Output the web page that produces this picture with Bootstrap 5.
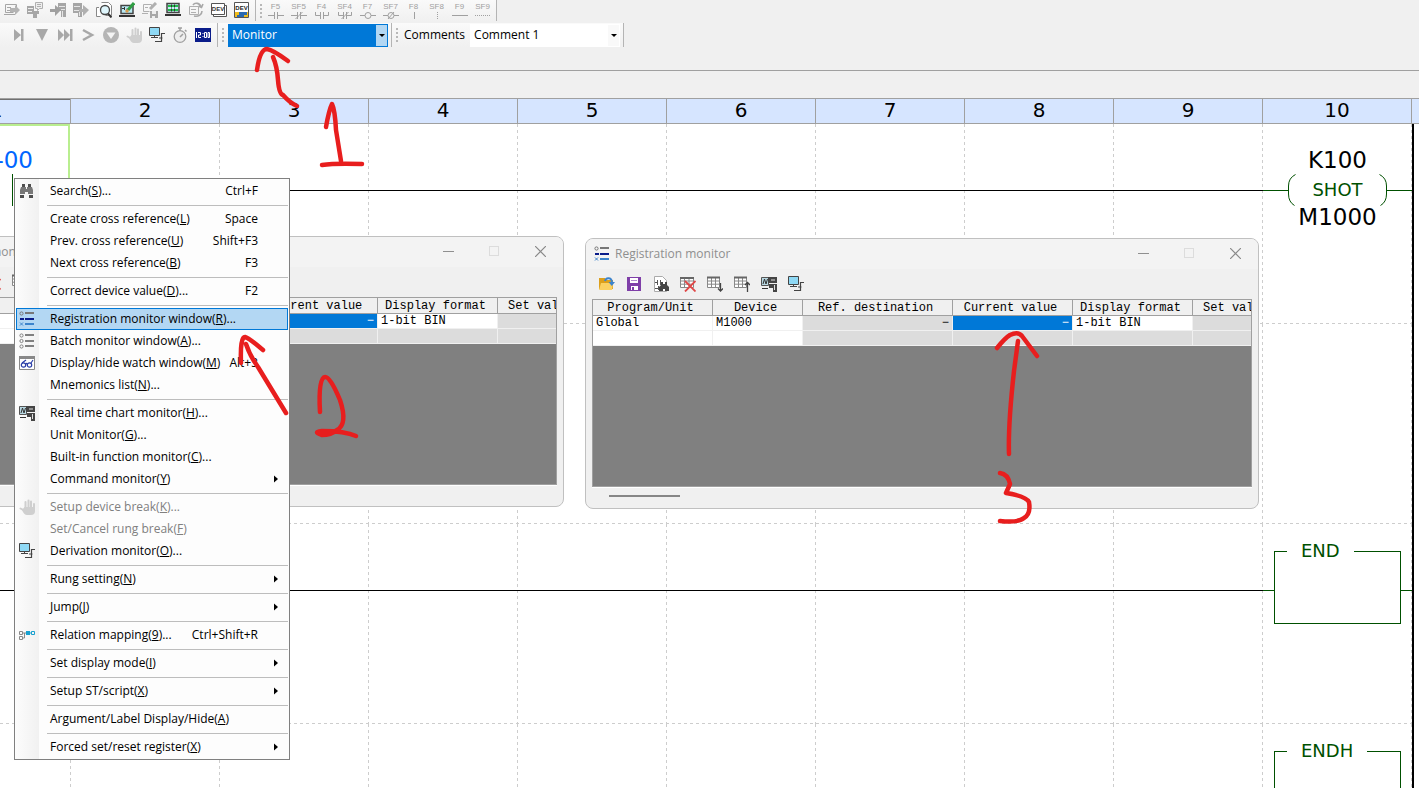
<!DOCTYPE html>
<html lang="en">
<head>
<meta charset="utf-8">
<meta name="viewport" content="width=device-width, initial-scale=1">
<title>Ladder monitor</title>
<link href="https://cdn.jsdelivr.net/npm/bootstrap@5.3.0/dist/css/bootstrap.min.css" rel="stylesheet">
<style>
  :root { --ui: "Open Sans", "Noto Sans", sans-serif; --ladder: "DejaVu Sans", sans-serif; --green: #005000; --dash: #cdcdcd; }
  body { background: #f0f0f0; color: #000; font: 12px/16px var(--ui); height: 100vh; }
  svg { display: block; flex: none; }
  .ico { width: 16px; height: 16px; }

  /* toolbars */
  .toolzone { height: 71px; border-bottom: 1px solid #a0a0a0; }
  .strip { background: linear-gradient(#fafafa, #f0f0f0); border-right: 1px solid #b4b4b4; }
  .strip-top { height: 21px; padding-right: 2px; }
  .strip-main { height: 24px; margin-top: 2px; padding-right: 3px; }
  .strip-first { padding-left: 7px; }
  .tool { width: 23px; height: 20px; padding: 0; border: 0; background: none; color: #a0a0a0; display: flex; flex-direction: column; align-items: center; justify-content: center; }
  .tool .cap { font: 8px/8px "Liberation Sans", sans-serif; }
  .grip { width: 2px; height: 14px; margin: 0 4px; background: repeating-linear-gradient(#b8b8b8 0 2px, transparent 2px 4px); }
  .strip-top .grip { margin-right: 2px; }
  .note-label { padding: 0 5px 0 2px; }
  .combo { height: 23px; }
  .combo select { appearance: none; width: 100%; height: 100%; border: 0; border-radius: 0; padding: 0 16px 0 4px; font: 12px/16px var(--ui); background: #fff; color: #000; }
  .combo .drop { right: 1px; top: 1px; bottom: 1px; width: 11px; background: #f9f9f9; pointer-events: none; }
  .combo-on select { background: #0078d7; color: #fff; }
  .combo-on .drop { background: #b3d7f3; }
  .combo-mode { width: 160px; }
  .combo-note { width: 150px; }

  /* ladder sheet */
  .sheet { margin-left: -78px; padding-top: 27px; }
  .lanes { display: grid; grid-template-columns: repeat(10, minmax(0, 1fr)) 7px; }
  .heads { height: 26px; background: #d6e5ff; border-top: 1px solid #a0a0a0; border-bottom: 1px solid #a0a0a0; font: 20px/22px var(--ladder); text-align: center; }
  .heads > div { border-right: 1px solid #a0a0a0; }
  .heads > div:first-child { box-shadow: inset 0 1px #707070; }
  .heads > div:last-child { border-right: 0; }
  .rung { height: 200px; background: repeating-linear-gradient(90deg, var(--dash) 0 3px, transparent 3px 6px) bottom / 100% 1px no-repeat; }
  .slot { background: repeating-linear-gradient(var(--dash) 0 3px, transparent 3px 6px) right / 1px 100% no-repeat; }
  .wired .slot-wire { background: linear-gradient(#000, #000) 0 66px / 100% 1px no-repeat, repeating-linear-gradient(var(--dash) 0 3px, transparent 3px 6px) right / 1px 100% no-repeat; }
  .rail { border-left: 2px solid #000; background: #fff; }
  .picked { border: 2px solid #b9ee8f; border-left: 0; margin-right: 1px; padding-top: 20px; }
  .picked .operand { padding-right: 35px; color: #06f; }
  .operand { font: 23px/28px var(--ladder); }
  .coil { padding-top: 22px; }
  .coil .operand + div { height: 32px; }
  .coil .opname, .fnbox legend { font: 18px/20px var(--ladder); color: var(--green); }
  .link-h { height: 1px; background: var(--green); }
  .fnbox { height: 83px; margin: 17px 0 0; border: 1px solid var(--green); }
  .fnbox legend { float: none; width: auto; margin: 0 0 0 12px; padding: 0 14px; }
  .stub { width: 11px; margin-top: 66px; }
  .contact { width: 1px; height: 32px; margin-right: 55px; background: var(--green); }

  /* floating monitor windows */
  .win { width: 674px; height: 271px; border: 1px solid #c0c0c0; border-radius: 8px; background: #f0f0f0; z-index: 2; overflow: hidden; }
  .win-a { left: -110px; top: 236px; }
  .win-b { left: 585px; top: 238px; }
  .win-head { height: 30px; background: #f3f3f3; color: #8f8f8f; padding: 0 0 0 8px; }
  .win-head .ico { margin-right: 5px; }
  .win-head button { width: 46px; height: 28px; padding: 0; border: 0; background: none; display: flex; align-items: center; justify-content: center; align-self: flex-start; }
  .win-tools { height: 30px; padding: 0 13px; gap: 11px; }
  .win-tools button { padding: 0; border: 0; background: none; }
  .pane { height: 188px; margin: 0 6px; border: 1px solid #a0a0a0; background: #808080; overflow: hidden; box-shadow: 0 1px #fff; }
  .pane table { table-layout: fixed; width: 690px; border-collapse: separate; border-spacing: 0; font: 12px/14px "Liberation Mono", monospace; }
  .pane th { height: 16px; padding: 1px 4px 0 0; line-height: 14px; font-weight: 400; text-align: center; background: #f0f0f0; border-right: 1px solid #a0a0a0; border-bottom: 1px solid #a0a0a0; white-space: nowrap; }
  .pane td { height: 15px; padding: 0 3px; background: #fff; border-right: 1px solid #f0f0f0; border-bottom: 1px solid #f0f0f0; white-space: nowrap; }
  .pane td.off { background: #dcdcdc; }
  .pane td.sel { background: #0078d7; color: #fff; }
  .thumb { width: 71px; height: 2px; margin: 8px 0 0 23px; background: #868686; }

  /* context menu */
  .ctx { display: block; left: 14px; top: 178px; width: 276px; padding: 1px; border: 1px solid #808080; border-radius: 0; z-index: 5; background: linear-gradient(90deg, #fcfcfc, #f1f1f1) 1px 0 / 23px 100% no-repeat #fdfdfd; font: 12px/16px var(--ui); color: #000; }
  .ctx button { display: flex; align-items: center; width: 100%; height: 22px; padding: 0 9px 0 2px; border: 1px solid transparent; background: none; color: #000; text-align: left; }
  .ctx button.hot { background: #b3d7f3; border-color: #0078d7; }
  .ctx button:disabled { color: #808080; }
  .ctx .ico { margin-right: 15px; }
  .ctx .key { margin-left: auto; padding-right: 20px; }
  .ctx hr { height: 1px; margin: 3px 0 2px 31px; border: 0; background: #bdbdbd; opacity: 1; }
  .more { margin-left: auto; }
  .ink { inset: 0; width: 100%; height: 100%; z-index: 9; pointer-events: none; fill: none; stroke: #e81e1e; stroke-width: 4.5; stroke-linecap: round; stroke-linejoin: round; }
</style>
</head>
<body class="d-flex flex-column overflow-hidden position-relative">

<svg width="0" height="0" class="position-absolute" aria-hidden="true">
  <symbol id="i-read" viewBox="0 0 16 16"><path fill="none" stroke="#a6a6a6" d="M1.500 2.500h11v3M1.500 2.500v8h8M0 12.500h11M3 5.500h4M3 8.500h4"/><path fill="#b4b4b4" d="M6 6h5V3l5 5-5 5v-3H6z"/></symbol>
  <symbol id="i-plcnote" viewBox="0 0 16 16"><path fill="#a6a6a6" d="M0 4h7v5h5v3h-2v4H6v-4H0z"/><path fill="#eee" stroke="#b0b0b0" d="M8.500.5h7v6h-3l-2 2v-2h-2z"/><path stroke="#b0b0b0" d="M10 2.500h4M10 4.500h4"/><path stroke="#eee" d="M1 6.500h5M1 9.500h4"/></symbol>
  <symbol id="i-plcin" viewBox="0 0 16 16"><path fill="#a6a6a6" d="M8 1h8v14h-5V9H8z"/><path stroke="#e6e6e6" d="M9 4.500h6M11 7.500h4M12.500 9v6"/><path fill="#a0a0a0" d="M0 7h5V3l6 5-6 6v-4H0z"/></symbol>
  <symbol id="i-plcout" viewBox="0 0 16 16"><path fill="#a6a6a6" d="M0 1h9v14H5v-4H0z"/><path stroke="#e6e6e6" d="M1 4.500h6M1 8.500h5M6.500 10v4"/><path fill="#b0b0b0" d="M6 7h4V3l6 5-6 6v-4H6z"/></symbol>
  <symbol id="i-verify" viewBox="0 0 16 16"><path fill="#fff" stroke="#888" d="M5.500.5h7l3 3v10h-6M3 5.500H.5v9h4"/><circle cx="9" cy="8" r="4.500" fill="#dff6fc" stroke="#444" stroke-width="1.300"/><path stroke="#333" stroke-width="2" d="M12 11.500l3.500 4"/></symbol>
  <symbol id="i-edit" viewBox="0 0 16 16"><path fill="#b9e9f3" stroke="#444" stroke-width="1.500" d="M2 3.500h12v8H2z"/><path fill="#333" d="M0 13h16v2H0z"/><path stroke="#333" d="M3 6.500h3M5.500 5v3M8 6.500V9"/><path stroke="#2f9e44" stroke-width="3" d="M9 8l6-7"/><path stroke="#d89a4e" stroke-width="3" d="M7 10l2-2"/></symbol>
  <symbol id="i-save-g" viewBox="0 0 16 16"><path fill="none" stroke="#b0b0b0" d="M1.500 2.500h8v3M1.500 2.500v7h6M0 11.500h6M3 5.500h3"/><path stroke="#b0b0b0" stroke-width="3" d="M8 7l6-6"/><path fill="#a8a8a8" d="M8 9h8v7H8z"/><path fill="#eee" d="M10 9h4v3h-4zM10 14h3v2h-3z"/></symbol>
  <symbol id="i-mon" viewBox="0 0 16 16"><path fill="#c8eef5" stroke="#444" stroke-width="1.500" d="M2 1.500h12v9H2z"/><path fill="#333" d="M0 12h16v2H0z"/><path stroke="#1fbf4a" stroke-width="2" d="M3 4h10M3 8h10"/><path stroke="#333" d="M6.500 2.500v3M9.500 2.500v3M6.500 6.500v3M9.500 6.500v3"/></symbol>
  <symbol id="i-sync" viewBox="0 0 16 16"><path fill="none" stroke="#b0b0b0" d="M1.500 4.500h9v8h-9zM3 7.500h5M3 10.500h5"/><path fill="none" stroke="#a8a8a8" stroke-width="1.600" d="M5 3c2-3 7-2 8 2M14 9c0 4-4 6-8 5M10.500 4l3 1.500L15 2"/></symbol>
  <symbol id="i-dev" viewBox="0 0 16 16"><path fill="#fff" stroke="#555" d="M2.500 3.500h13v11h-13z"/><path fill="#fff" stroke="#555" d="M.5 1.500h13v11H.5z"/><text x="7" y="9" font-family="Liberation Sans, sans-serif" font-size="6" font-weight="bold" text-anchor="middle" fill="#333">DEV</text></symbol>
  <symbol id="i-dev2" viewBox="0 0 16 16"><path fill="#fff" stroke="#555" d="M.5.500h14v15H.5z"/><text x="7.500" y="8" font-family="Liberation Sans, sans-serif" font-size="6" font-weight="bold" text-anchor="middle" fill="#222">DEV</text><path fill="#f0bc1b" d="M1 10h13v5H1z"/><path fill="#2a69b0" d="M5 10h8v3h-3v2H3v-2h2z"/></symbol>
  <symbol id="i-step" viewBox="0 0 16 16"><path fill="#a8a8a8" d="M3 2l7 6-7 6zM10 2h2.500v12H10z"/></symbol>
  <symbol id="i-down" viewBox="0 0 16 16"><path fill="#a8a8a8" d="M2 2h12L8 14z"/></symbol>
  <symbol id="i-ff" viewBox="0 0 16 16"><path fill="#a8a8a8" d="M1 2l6 6-6 6zM7 2l6 6-6 6zM13 2h2.500v12H13z"/></symbol>
  <symbol id="i-gt" viewBox="0 0 16 16"><path fill="none" stroke="#a8a8a8" stroke-width="2.500" d="M3 3l9 5-9 5"/></symbol>
  <symbol id="i-circ" viewBox="0 0 16 16"><circle cx="8" cy="8" r="8" fill="#b5b5b5"/><path fill="#f4f4f4" d="M3.500 5.500h9L8 12z"/></symbol>
  <symbol id="i-hand" viewBox="0 0 16 16"><path fill="none" stroke="#cfcfcf" stroke-width="2" stroke-linecap="round" d="M6.500 9V3M9.500 8V1.500M12 8V2.500M15 10V5M6 12L1.500 9.500"/><path fill="#cfcfcf" d="M5.500 8H16v4q0 4-4 4H8q-3 0-5-5z"/></symbol>
  <symbol id="i-deriv" viewBox="0 0 16 16"><path fill="#8fd9f5" stroke="#444" d="M.5.500h10v8H.5z"/><path stroke="#444" d="M5.500 9v2M2 10.500h7"/><path fill="none" stroke="#444" stroke-width="1.200" d="M16 6.500h-3.500v4M10 11h3.500M6 14.500h6.500V11"/></symbol>
  <symbol id="i-watch" viewBox="0 0 16 16"><circle cx="8" cy="9.500" r="5.800" fill="#eee" stroke="#a0a0a0" stroke-width="1.300"/><path stroke="#a0a0a0" stroke-width="1.500" d="M6 1h4M8 1v3M8 10l3-3M13 3l1.500 1.500"/></symbol>
  <symbol id="i-clock" viewBox="0 0 16 16"><path fill="#0a1c8a" d="M0 1h16v14H0z"/><path fill="none" stroke="#fff" d="M1.500 5v6M3 5.500h2.500V8H3.500v2.500H6M8 6v1M8 9v1M9.500 5.500h2v5h-2zM13 5.500h1.500v5H13z"/></symbol>

  <symbol id="i-find" viewBox="0 0 16 16"><path fill="#4e4e4e" d="M3 1h3v3H3zM9 1h3v3H9zM1 12h4v3H1zM10 12h4v3h-4z"/><path fill="#777" d="M2 4h5v2h1V4h5l1 3v4H9V9H6v2H1V7z"/></symbol>
  <symbol id="i-reg" viewBox="0 0 16 16"><circle cx="2.500" cy="2.500" r="1.600" fill="none" stroke="#777"/><path stroke="#777" stroke-width="2" d="M6 2h9"/><path stroke="#0a1c8a" stroke-width="2" d="M1 8h4M6 8h9"/><path stroke="#3d84cc" stroke-width="2" d="M6 13h9"/><path stroke="#3d84cc" d="M1 11.500l3 3M4 11.500l-3 3"/></symbol>
  <symbol id="i-batch" viewBox="0 0 16 16"><g fill="none" stroke="#808080"><circle cx="2.500" cy="2.500" r="1.600"/><circle cx="2.500" cy="8" r="1.600"/><circle cx="2.500" cy="13.500" r="1.600"/><path stroke-width="2" d="M6 2h9M6 8h9M6 13h9"/></g></symbol>
  <symbol id="i-glass" viewBox="0 0 16 16"><path fill="#fff" stroke="#888" d="M.5 1.500h15v13H.5z"/><path fill="#888" d="M0 1h16v3H0z"/><g fill="none" stroke="#2a3ea8" stroke-width="1.200"><circle cx="4.500" cy="10" r="2.200"/><circle cx="10.500" cy="10" r="2.200"/><path d="M6.500 9q1-1 2 0M3 8l4-3M12 8l2-3"/></g></symbol>
  <symbol id="i-chart" viewBox="0 0 16 16"><path fill="#b8d8e2" stroke="#555" d="M.5 1.500h7v8h-7z"/><path fill="none" stroke="#333" d="M2 8l1.500-5L5 8l1.500-5M1 12.500h6"/><path fill="#444" d="M7 1h9v6H7zM8 8h8v8h-4v-4H8z"/><path stroke="#ddd" d="M10 4h4M13.500 9v5"/></symbol>
  <symbol id="i-map" viewBox="0 0 16 16"><path fill="none" stroke="#888" d="M.5 4.500h3v3h-3zM.5 9.500h3v3h-3zM4 6h4M5.500 6v5H4"/><path fill="#18a0cf" d="M7 4h4v4H7z"/><path fill="none" stroke="#18a0cf" d="M11 6h1.500v-1.500h3v3h-3V6"/></symbol>

  <symbol id="i-open" viewBox="0 0 16 16"><path fill="#dc9f1c" d="M0 2h6l1 2h7v9H0z"/><path fill="#fbd062" d="M2 7h12l-1 7H0z"/><path fill="none" stroke="#3d84cc" stroke-width="2" d="M6 5c1-4 7-4 7 2"/><path fill="#3d84cc" d="M9.500 6H16l-3.200 4z"/></symbol>
  <symbol id="i-save" viewBox="0 0 16 16"><path fill="#7f3fa8" d="M1 1h14v14H1z"/><path fill="#fff" d="M4 2h8v5H4zM5 10h7v4H5z"/><path stroke="#b08ccc" d="M5 4.500h6"/><path fill="#7f3fa8" d="M6 11h2v3H6z"/></symbol>
  <symbol id="i-docfind" viewBox="0 0 16 16"><path fill="#fff" stroke="#aaa" d="M1.500.5h8l4 4v11h-12z"/><path stroke="#555" d="M2 6.500h2M4.500 4v5M7.500 4v5M8 6.500h2M2 12.500h3M5.500 10v4"/><path fill="#444" d="M8 6h2v2h2V6h2v3l2 2v4h-4v-2h-2v2H6v-4l2-2z"/></symbol>
  <symbol id="i-tabx" viewBox="0 0 16 16"><path fill="#fff" stroke="#888" d="M.5 1.500h13v10H.5zM.5 5h13M.5 8.200h13M4.500 1v11M9 1v11"/><path stroke="#666" stroke-width="2" d="M0 2h14"/><path stroke="#e04848" stroke-width="1.800" d="M5 5l10.500 10.500M15.500 5L5 15.500"/></symbol>
  <symbol id="i-tabd" viewBox="0 0 16 16"><path fill="#fff" stroke="#888" d="M.5 1.500h12v10H.5zM.5 5h12M.5 8.200h12M4.500 1v11M8.500 1v11"/><path stroke="#666" stroke-width="2" d="M0 1.500h13"/><path fill="none" stroke="#444" stroke-width="1.300" d="M13.500 7v8M11 12.500l2.500 2.500 2.500-2.500"/></symbol>
  <symbol id="i-tabu" viewBox="0 0 16 16"><path fill="#fff" stroke="#888" d="M.5 1.500h12v10H.5zM.5 5h12M.5 8.200h12M4.500 1v11M8.500 1v11"/><path stroke="#666" stroke-width="2" d="M0 1.500h13"/><path fill="none" stroke="#444" stroke-width="1.300" d="M13.500 16V7M11 9l2.500-2.500L16 9"/></symbol>
  <symbol id="i-arrow" viewBox="0 0 5 9"><path d="M0 0l5 4.500L0 9z"/></symbol>
</svg>

<header class="toolzone flex-shrink-0">
  <div class="d-flex align-items-center">
    <div class="strip strip-top d-flex">
      <button class="tool" aria-label="Read from PLC"><svg class="ico"><use href="#i-read"/></svg></button>
      <button class="tool" aria-label="Read comments"><svg class="ico"><use href="#i-plcnote"/></svg></button>
      <button class="tool" aria-label="Transfer to PLC"><svg class="ico"><use href="#i-plcin"/></svg></button>
      <button class="tool" aria-label="Transfer from PLC"><svg class="ico"><use href="#i-plcout"/></svg></button>
      <button class="tool" aria-label="Verify"><svg class="ico"><use href="#i-verify"/></svg></button>
      <button class="tool" aria-label="Online edit"><svg class="ico"><use href="#i-edit"/></svg></button>
      <button class="tool" aria-label="Save online edit"><svg class="ico"><use href="#i-save-g"/></svg></button>
      <button class="tool" aria-label="Monitor"><svg class="ico"><use href="#i-mon"/></svg></button>
      <button class="tool" aria-label="Refresh"><svg class="ico"><use href="#i-sync"/></svg></button>
      <button class="tool" aria-label="Device windows"><svg class="ico"><use href="#i-dev"/></svg></button>
      <button class="tool" aria-label="Device Python"><svg class="ico"><use href="#i-dev2"/></svg></button>
    </div>
    <div class="strip strip-top d-flex align-items-center">
      <span class="grip"></span>
      <button class="tool"><span class="cap">F5</span><svg width="16" height="8"><path fill="none" stroke="#a0a0a0" d="M0 4.500h6M6.500 1v7M9.500 1v7M10 4.500h6"/></svg></button>
      <button class="tool"><span class="cap">SF5</span><svg width="16" height="8"><path fill="none" stroke="#a0a0a0" d="M0 4.500h6M6.500 1v7M9.500 1v7M10 4.500h6M4.500 8l7-7"/></svg></button>
      <button class="tool"><span class="cap">F4</span><svg width="16" height="8"><path fill="none" stroke="#a0a0a0" d="M1.500 1v3.500H6M6.500 1v7M9.500 1v7M10 4.500h4.500V1"/></svg></button>
      <button class="tool"><span class="cap">SF4</span><svg width="16" height="8"><path fill="none" stroke="#a0a0a0" d="M1.500 1v3.500H6M6.500 1v7M9.500 1v7M10 4.500h4.500V1M4.500 8l7-7"/></svg></button>
      <button class="tool"><span class="cap">F7</span><svg width="16" height="8"><path fill="none" stroke="#a0a0a0" d="M0 4.500h5M11 4.500h5"/><circle cx="8" cy="4.500" r="3" fill="none" stroke="#a0a0a0"/></svg></button>
      <button class="tool"><span class="cap">SF7</span><svg width="16" height="8"><path fill="none" stroke="#a0a0a0" d="M0 4.500h5M11 4.500h5M5 8l6-7"/><circle cx="8" cy="4.500" r="3" fill="none" stroke="#a0a0a0"/></svg></button>
      <button class="tool"><span class="cap">F8</span><svg width="16" height="8"><path stroke="#a0a0a0" d="M8.500 1v7"/></svg></button>
      <button class="tool"><span class="cap">SF8</span><svg width="16" height="8"><path stroke="#a0a0a0" stroke-dasharray="1 1" d="M8.500 1v7"/></svg></button>
      <button class="tool"><span class="cap">F9</span><svg width="16" height="8"><path stroke="#a0a0a0" d="M0 4.500h16"/></svg></button>
      <button class="tool"><span class="cap">SF9</span><svg width="16" height="8"><path stroke="#a0a0a0" stroke-dasharray="1 1" d="M0 4.500h16"/></svg></button>
    </div>
  </div>
  <div class="d-flex align-items-center">
    <div class="strip strip-main strip-first d-flex align-items-center">
      <button class="tool" aria-label="Step"><svg class="ico"><use href="#i-step"/></svg></button>
      <button class="tool" aria-label="Step down"><svg class="ico"><use href="#i-down"/></svg></button>
      <button class="tool" aria-label="Run to end"><svg class="ico"><use href="#i-ff"/></svg></button>
      <button class="tool" aria-label="Next"><svg class="ico"><use href="#i-gt"/></svg></button>
      <button class="tool" aria-label="Options"><svg class="ico"><use href="#i-circ"/></svg></button>
      <button class="tool" aria-label="Break"><svg class="ico"><use href="#i-hand"/></svg></button>
      <button class="tool" aria-label="Derivation monitor"><svg class="ico"><use href="#i-deriv"/></svg></button>
      <button class="tool" aria-label="Scan time"><svg class="ico"><use href="#i-watch"/></svg></button>
      <button class="tool" aria-label="Clock"><svg class="ico"><use href="#i-clock"/></svg></button>
    </div>
    <div class="strip strip-main d-flex align-items-center">
      <span class="grip"></span>
      <div class="combo combo-on combo-mode position-relative">
        <select aria-label="Mode"><option>Monitor</option><option>Editor</option></select>
        <span class="drop position-absolute d-flex align-items-center justify-content-center"><svg width="6" height="3"><path d="M0 0h6L3 3z"/></svg></span>
      </div>
    </div>
    <div class="strip strip-main d-flex align-items-center">
      <span class="grip"></span>
      <label for="note" class="note-label">Comments</label>
      <div class="combo combo-note position-relative">
        <select id="note"><option>Comment 1</option><option>Comment 2</option></select>
        <span class="drop position-absolute d-flex align-items-center justify-content-center"><svg width="6" height="3"><path d="M0 0h6L3 3z"/></svg></span>
      </div>
    </div>
  </div>
</header>

<main class="flex-fill overflow-hidden">
  <div class="sheet">
    <div class="lanes heads">
      <div>1</div><div>2</div><div>3</div><div>4</div><div>5</div><div>6</div><div>7</div><div>8</div><div>9</div><div>10</div><div></div>
    </div>
    <div class="bg-white">
      <section class="lanes rung wired">
        <div class="picked text-end">
          <div class="operand">-00</div>
          <div class="d-flex justify-content-end"><span class="contact"></span></div>
        </div>
        <div class="slot slot-wire"></div><div class="slot slot-wire"></div><div class="slot slot-wire"></div><div class="slot slot-wire"></div><div class="slot slot-wire"></div><div class="slot slot-wire"></div><div class="slot slot-wire"></div><div class="slot slot-wire"></div>
        <div class="slot coil text-center">
          <div class="operand">K100</div>
          <div class="d-flex align-items-center">
            <span class="link-h flex-fill"></span>
            <svg width="8" height="32"><path fill="none" stroke="#005000" d="M7.500.5Q.5 4 .5 12v8q0 8 6 11.500"/></svg>
            <span class="opname px-3">SHOT</span>
            <svg width="8" height="32"><path fill="none" stroke="#005000" d="M.5.500q7 3.500 7 11.500v8q0 8-6 11.500"/></svg>
            <span class="link-h flex-fill"></span>
          </div>
          <div class="operand lh-1">M1000</div>
        </div>
        <div class="rail"></div>
      </section>
      <section class="lanes rung">
        <div class="slot"></div><div class="slot"></div><div class="slot"></div><div class="slot"></div><div class="slot"></div><div class="slot"></div><div class="slot"></div><div class="slot"></div><div class="slot"></div><div class="slot"></div><div class="rail"></div>
      </section>
      <section class="lanes rung wired">
        <div class="slot slot-wire"></div><div class="slot slot-wire"></div><div class="slot slot-wire"></div><div class="slot slot-wire"></div><div class="slot slot-wire"></div><div class="slot slot-wire"></div><div class="slot slot-wire"></div><div class="slot slot-wire"></div><div class="slot slot-wire"></div>
        <div class="slot d-flex align-items-start">
          <span class="link-h stub"></span><fieldset class="fnbox flex-fill"><legend>END</legend></fieldset><span class="link-h stub"></span>
        </div>
        <div class="rail"></div>
      </section>
      <section class="lanes rung wired">
        <div class="slot slot-wire"></div><div class="slot slot-wire"></div><div class="slot slot-wire"></div><div class="slot slot-wire"></div><div class="slot slot-wire"></div><div class="slot slot-wire"></div><div class="slot slot-wire"></div><div class="slot slot-wire"></div><div class="slot slot-wire"></div>
        <div class="slot d-flex align-items-start">
          <span class="link-h stub"></span><fieldset class="fnbox flex-fill"><legend>ENDH</legend></fieldset><span class="link-h stub"></span>
        </div>
        <div class="rail"></div>
      </section>
    </div>
  </div>
</main>

<template id="monitor">
  <div class="win-head d-flex align-items-center">
    <svg class="ico"><use href="#i-reg"/></svg>
    <span class="flex-fill">Registration monitor</span>
    <button aria-label="Minimize"><svg width="11" height="11"><path stroke="#8f8f8f" d="M0 5.500h11"/></svg></button>
    <button aria-label="Maximize"><svg width="11" height="11"><rect x=".5" y=".5" width="9" height="9" fill="none" stroke="#dcdcdc"/></svg></button>
    <button aria-label="Close"><svg width="11" height="11"><path stroke="#8a8a8a" stroke-width="1.200" d="M0 0l11 11M11 0L0 11"/></svg></button>
  </div>
  <div class="win-tools d-flex align-items-center">
    <button aria-label="Open"><svg class="ico"><use href="#i-open"/></svg></button>
    <button aria-label="Save"><svg class="ico"><use href="#i-save"/></svg></button>
    <button aria-label="Find device"><svg class="ico"><use href="#i-docfind"/></svg></button>
    <button aria-label="Delete row"><svg class="ico"><use href="#i-tabx"/></svg></button>
    <button aria-label="Move down"><svg class="ico"><use href="#i-tabd"/></svg></button>
    <button aria-label="Move up"><svg class="ico"><use href="#i-tabu"/></svg></button>
    <button aria-label="Chart monitor"><svg class="ico"><use href="#i-chart"/></svg></button>
    <button aria-label="Derivation monitor"><svg class="ico"><use href="#i-deriv"/></svg></button>
  </div>
  <div class="pane">
    <table>
      <colgroup><col style="width:120px"><col style="width:90px"><col style="width:150px"><col style="width:120px"><col style="width:120px"><col style="width:90px"></colgroup>
      <thead><tr><th>Program/Unit</th><th>Device</th><th>Ref. destination</th><th>Current value</th><th>Display format</th><th>Set value</th></tr></thead>
      <tbody>
        <tr><td>Global</td><td>M1000</td><td class="off text-end">&minus;</td><td class="sel text-end">&minus;</td><td>1-bit BIN</td><td class="off"></td></tr>
        <tr><td></td><td></td><td class="off"></td><td class="off"></td><td class="off"></td><td class="off"></td></tr>
      </tbody>
    </table>
  </div>
  <div class="thumb"></div>
</template>
<section class="win win-a position-absolute"></section>
<section class="win win-b position-absolute"></section>

<div class="ctx dropdown-menu" role="menu">
  <button><svg class="ico"><use href="#i-find"/></svg>Search(<u>S</u>)...<span class="key">Ctrl+F</span></button>
  <hr>
  <button><svg class="ico"></svg>Create cross reference(<u>L</u>)<span class="key">Space</span></button>
  <button><svg class="ico"></svg>Prev. cross reference(<u>U</u>)<span class="key">Shift+F3</span></button>
  <button><svg class="ico"></svg>Next cross reference(<u>B</u>)<span class="key">F3</span></button>
  <hr>
  <button><svg class="ico"></svg>Correct device value(<u>D</u>)...<span class="key">F2</span></button>
  <hr>
  <button class="hot"><svg class="ico"><use href="#i-reg"/></svg>Registration monitor window(<u>R</u>)...</button>
  <button><svg class="ico"><use href="#i-batch"/></svg>Batch monitor window(<u>A</u>)...</button>
  <button><svg class="ico"><use href="#i-glass"/></svg>Display/hide watch window(<u>M</u>)<span class="key">Alt+3</span></button>
  <button><svg class="ico"></svg>Mnemonics list(<u>N</u>)...</button>
  <hr>
  <button><svg class="ico"><use href="#i-chart"/></svg>Real time chart monitor(<u>H</u>)...</button>
  <button><svg class="ico"></svg>Unit Monitor(<u>G</u>)...</button>
  <button><svg class="ico"></svg>Built-in function monitor(<u>C</u>)...</button>
  <button><svg class="ico"></svg>Command monitor(<u>Y</u>)<svg class="more" width="4" height="8"><use href="#i-arrow"/></svg></button>
  <hr>
  <button disabled><svg class="ico"><use href="#i-hand"/></svg>Setup device break(<u>K</u>)...</button>
  <button disabled><svg class="ico"></svg>Set/Cancel rung break(<u>F</u>)</button>
  <button><svg class="ico"><use href="#i-deriv"/></svg>Derivation monitor(<u>O</u>)...</button>
  <hr>
  <button><svg class="ico"></svg>Rung setting(<u>N</u>)<svg class="more" width="4" height="8"><use href="#i-arrow"/></svg></button>
  <hr>
  <button><svg class="ico"></svg>Jump(<u>J</u>)<svg class="more" width="4" height="8"><use href="#i-arrow"/></svg></button>
  <hr>
  <button><svg class="ico"><use href="#i-map"/></svg>Relation mapping(<u>9</u>)...<span class="key">Ctrl+Shift+R</span></button>
  <hr>
  <button><svg class="ico"></svg>Set display mode(<u>I</u>)<svg class="more" width="4" height="8"><use href="#i-arrow"/></svg></button>
  <hr>
  <button><svg class="ico"></svg>Setup ST/script(<u>X</u>)<svg class="more" width="4" height="8"><use href="#i-arrow"/></svg></button>
  <hr>
  <button><svg class="ico"></svg>Argument/Label Display/Hide(<u>A</u>)</button>
  <hr>
  <button><svg class="ico"></svg>Forced set/reset register(<u>X</u>)<svg class="more" width="4" height="8"><use href="#i-arrow"/></svg></button>
</div>

<svg class="ink position-absolute" aria-hidden="true">
  <path d="M257 70Q260 49 267 49Q273 50 288 61M273 57Q277 66 278 80T283 95Q290 103 297 106"/>
  <path d="M326 127Q329 110 332 104Q335 110 336 130L341 161M322 165Q335 163 362 164"/>
  <path d="M241 363Q240 337 245 337Q249 338 263 350M246 344Q250 356 258 367L286 413"/>
  <path d="M320 412Q318 378 325 377Q330 376 340 400Q348 424 337 430Q331 435 322 435Q312 432 322 431Q345 431 356 436"/>
  <path d="M997 348Q1005 338 1010 335Q1018 331 1022 336L1037 356M1018 341L1014 371Q1008 425 1009 454"/>
  <path d="M1000 473Q1008 474 1010 484L1006 493Q1026 496 1029 502Q1031 514 1024 518Q1018 523 1000 521"/>
</svg>

<script src="https://cdn.jsdelivr.net/npm/bootstrap@5.3.0/dist/js/bootstrap.bundle.min.js"></script>
<script>
  const monitor = document.getElementById('monitor');
  document.querySelectorAll('.win').forEach(w => w.append(monitor.content.cloneNode(true)));
</script>
</body>
</html>
